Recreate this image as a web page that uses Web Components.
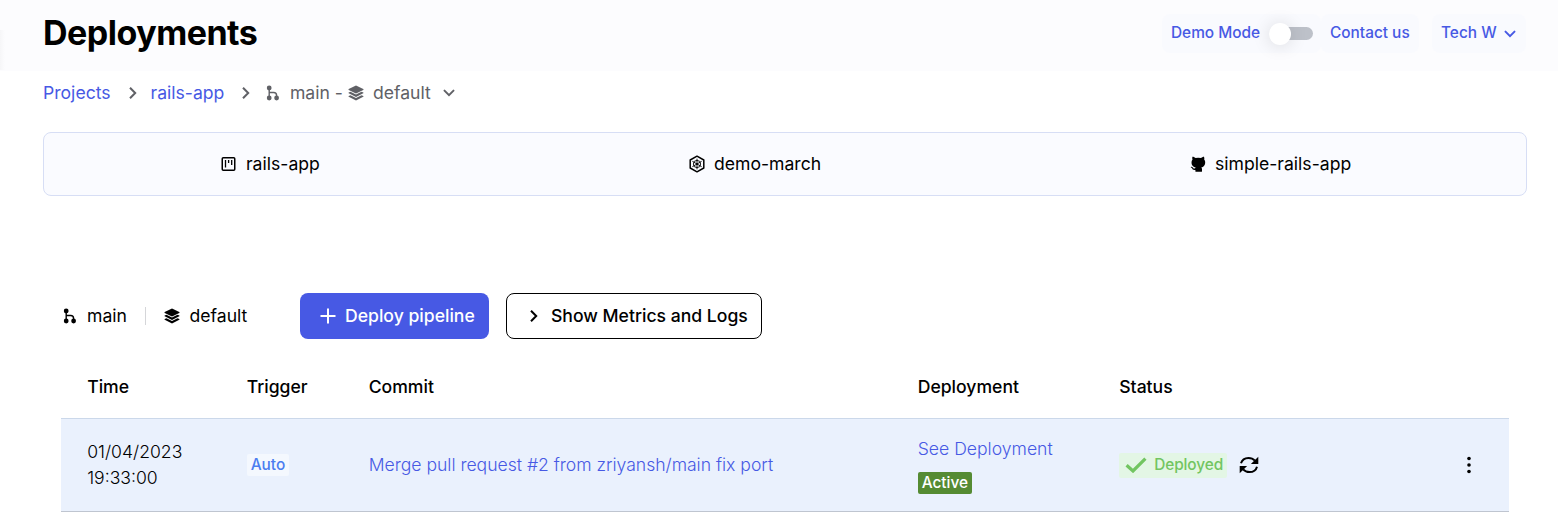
<!DOCTYPE html>
<html lang="en">
<head>
<meta charset="utf-8">
<title>Deployments</title>
<style>
body{margin:0;background:#fff;color:#000;font:400 17.6px/26px Inter,"Liberation Sans",sans-serif;overflow:hidden}
</style>
</head>
<body>
<deployments-page></deployments-page>
<script>
const define = (name, html) => customElements.define(name, class extends HTMLElement {
  constructor(){ super(); this.attachShadow({mode:"open"}).innerHTML = html; }
});

const ICONS = {
  right: ['0 0 10 14','<path d="M2 1.800 7.200 7 2 12.200" fill="none" stroke="currentColor" stroke-width="2"/>'],
  down: ['0 0 12 8','<path d="M1.500 1.600 6 6.100l4.500-4.500" fill="none" stroke="currentColor" stroke-width="2" stroke-linecap="round"/>'],
  branch: ['0 0 14 16','<g fill="currentColor"><circle cx="3.200" cy="3" r="2.400"/><circle cx="3.200" cy="13" r="2.400"/><circle cx="10.600" cy="13" r="2.400"/></g><path d="M3.200 3v10M3.200 7.500h4.500q2.900 0 2.900 3v2.500" fill="none" stroke="currentColor" stroke-width="1.400"/>'],
  layers: ['0 0 16 16','<g fill="currentColor"><path d="M8 .5 15.300 4.100q.5.400 0 .8L8 8.500.7 4.900q-.5-.4 0-.8z"/><path d="M.7 7.500 2.500 6.700 8 9.400l5.500-2.700 1.800.8q.5.400 0 .8L8 11.900.7 8.300q-.5-.4 0-.8z"/><path d="M.7 11 2.500 10.200 8 12.900l5.500-2.700 1.800.8q.5.400 0 .8L8 15.400.7 11.800q-.5-.4 0-.8z"/></g>'],
  board: ['0 0 16 16','<g fill="none" stroke="currentColor"><rect x="1.250" y="1.750" width="12.500" height="12.500" rx="1" stroke-width="1.500"/><path d="M4.500 4v7.500M7.600 4v3M10.700 4v5" stroke-width="1.300"/></g>'],
  cluster: ['0 0 16 18','<g fill="none" stroke="currentColor"><path d="M8 1.200 14.800 5v8L8 16.800 1.200 13V5z" stroke-width="1.500" stroke-linejoin="round"/><circle cx="8" cy="9" r="3.600" stroke-width=".9"/><path d="M8 3.700v10.600M3.400 6.350l9.200 5.300M3.400 11.650l9.200-5.300" stroke-width=".9"/></g><circle cx="8" cy="9" r="1.100" fill="currentColor"/>'],
  cat: ['0 0 16 16','<path fill="currentColor" d="M2.400.7C3.300.5 4.600 1.200 5.500 1.900q2.500-.4 5.600 0C12 1.200 13.200.500 14 .7q.6 1.500.2 2.900Q15.400 5 15.200 7c-.3 2.700-1.700 4.100-3.900 4.500q.7.700.7 1.500v2.200q0 .6-.6.600H6q-.6 0-.6-.6v-1.200c-2.500.3-2.900-.800-3.400-1.700Q1.600 11.500.7 11.200q0-.6.8-.5c1.200.200 1.500 1.200 2.200 1.700.7.400 1.500.300 2-.9C3.300 11.100 1.700 9.700 1.500 7q-.1-2 1-3.400Q2 2.200 2.400.7z"/>'],
  plus: ['0 0 16 16','<path d="M8 .5v15M.5 8h15" stroke="currentColor" stroke-width="2"/>'],
  check: ['0 0 22 16','<path d="M1.600 8.200 8 14 20.400 1.600" fill="none" stroke="currentColor" stroke-width="3.200"/>'],
  sync: ['0 0 20 18','<g fill="none" stroke="currentColor" stroke-width="2"><path d="M2 7.300C3 3.800 6 1.900 9.500 1.900c2.700 0 4.700.900 6.400 2.800"/><path d="M18 10.700c-1 3.500-4 5.400-7.500 5.400-2.700 0-4.700-.900-6.400-2.800"/></g><path d="M19.300.7v7.400h-7.400zM.7 17.300V9.900h7.400z" fill="currentColor"/>'],
  more: ['0 0 4 18','<g fill="currentColor"><circle cx="2" cy="2.500" r="1.800"/><circle cx="2" cy="9" r="1.800"/><circle cx="2" cy="15.500" r="1.800"/></g>']
};
customElements.define("ui-icon", class extends HTMLElement {
  connectedCallback(){
    if (this.shadowRoot) return;
    const [box, body] = ICONS[this.getAttribute("name")];
    const [, , w, h] = box.split(" ");
    this.attachShadow({mode:"open"}).innerHTML =
      `<style>:host{display:block;flex:none}svg{display:block}</style><svg width="${w}" height="${h}" viewBox="${box}">${body}</svg>`;
  }
});

define("page-header", `<style>
:host{display:flex;align-items:flex-start;box-sizing:border-box;height:71px;padding:0 32px 0 43px;background:linear-gradient(90deg,#f6f6f8,#fcfcfe00 5px) 0 30px/6px 40px no-repeat,#fcfcfe;color:#4759e4}
h1{margin:11px auto 0 0;font-size:34px;line-height:44px;font-weight:700;letter-spacing:-.5px;color:#000}
.chip{display:flex;align-items:center;box-sizing:border-box;height:39px;margin-top:14px;border-radius:8px;background:#f9fafe;font-size:15.400px;font-weight:500;padding:0 9px;white-space:nowrap}
.chip span{position:relative;top:-1px}
.demo{width:159px;padding-right:0}.contact{width:98px;margin-right:-1px;padding-right:0}.user{width:94px;margin-left:14px;gap:7px}
.switch{display:flex;align-items:center;width:44px;height:22px;margin-left:9px}
.knob{width:22px;height:22px;flex:none;border-radius:50%;background:#fff;box-shadow:0 1px 18px #0002;z-index:1}
.track{width:33px;height:13px;flex:none;margin-left:-11px;border-radius:7px;background:#bdc1c9}
</style><h1>Deployments</h1>
<div class="chip demo"><span>Demo Mode</span><div class="switch"><div class="knob"></div><div class="track"></div></div></div>
<div class="chip contact"><span>Contact us</span></div>
<div class="chip user"><span>Tech W</span><ui-icon name="down"></ui-icon></div>`);

define("crumb-trail", `<style>
:host{display:flex;align-items:center;height:26px;padding:9px 0 0 43px;color:#606166}
a{color:#4759e4}
.c1{margin:0 13px 0 17px}.c2{margin:0 14.500px 0 17px}
.b{margin-right:10px}.l{margin:0 9px 0 5px}.d{margin-left:12px}
</style><a>Projects</a><ui-icon class="c1" name="right"></ui-icon><a>rails-app</a><ui-icon class="c2" name="right"></ui-icon>
<ui-icon class="b" name="branch"></ui-icon><span>main -</span><ui-icon class="l" name="layers"></ui-icon><span>default</span><ui-icon class="d" name="down"></ui-icon>`);

define("info-bar", `<style>
:host{display:flex;box-sizing:border-box;height:64px;margin:26px 31px 0 43px;border:1px solid #d7def5;border-radius:8px;background:#fafbff}
div{display:flex;align-items:center;gap:9px}
.a{margin-left:177px;width:468px}.b{width:501px}
</style><div class="a"><ui-icon name="board"></ui-icon><span>rails-app</span></div><div class="b"><ui-icon name="cluster"></ui-icon><span>demo-march</span></div><div><ui-icon name="cat"></ui-icon><span>simple-rails-app</span></div>`);

define("pipeline-toolbar", `<style>
:host{display:flex;align-items:center;height:46px;margin:97px 0 0 63px}
.env{display:flex;align-items:center;gap:10px}
.env.b{width:82px}
.env.s{gap:9.500px;width:136px}
i{width:1px;height:18px;background:#d5d6d9;margin-right:18px}
button{display:flex;align-items:center;box-sizing:border-box;height:46px;border-radius:8px;font:500 17.600px/26px Inter,sans-serif;white-space:nowrap}
.p{width:189px;padding:0 0 0 20px;gap:9px;border:0;background:#4759e4;color:#fff;font-weight:550;margin-right:17px}
.m{width:256px;padding:0 0 0 22px;gap:12px;border:1px solid #000;background:#fff;color:#000}
</style><div class="env b"><ui-icon name="branch"></ui-icon><span>main</span></div><i></i><div class="env s"><ui-icon name="layers"></ui-icon><span>default</span></div>
<button class="p"><ui-icon name="plus"></ui-icon><span>Deploy pipeline</span></button><button class="m"><ui-icon name="right"></ui-icon><span>Show Metrics and Logs</span></button>`);

define("deployment-table", `<style>
:host{display:block;margin:16px 49px 0 61px}
.row{display:grid;grid-template-columns:159.500px 122px 549px 201.500px 348px auto;align-items:center;padding-left:26.200px}
.head{height:63px;font-weight:500}
.body{box-sizing:border-box;height:94px;background:#eaf1fd;border-top:1px solid #cbd8ea;border-bottom:1px solid #bfc5d0;font-weight:320}
a{color:#4759e4}
.body>a{letter-spacing:-.02px}
.tag{display:inline-block;border-radius:2px;font-size:15.400px;line-height:22px;padding:0 4px;font-weight:400}
.auto{position:relative;top:-1px;background:#f4f8fe;color:#4b7df0;font-weight:450}
.active{background:#558b33;color:#fff;font-weight:500}
.dep{display:flex;flex-direction:column;align-items:flex-start;gap:10px;margin-top:-1px}
.dep a{line-height:26px}
.st{display:flex;align-items:center;gap:12px}
.ok{display:flex;align-items:center;box-sizing:border-box;width:108px;height:25px;padding-left:6px;gap:7px;border-radius:2px;background:#e3f6e5;color:#72c561;font-size:15.400px;font-weight:450;letter-spacing:-.1px}
</style>
<div class="row head"><span>Time</span><span>Trigger</span><span>Commit</span><span>Deployment</span><span>Status</span></div>
<div class="row body"><span>01/04/2023<br>19:33:00</span><span><span class="tag auto">Auto</span></span><a>Merge pull request #2 from zriyansh/main fix port</a>
<div class="dep"><a>See Deployment</a><span class="tag active">Active</span></div>
<div class="st"><span class="ok"><ui-icon name="check"></ui-icon><span>Deployed</span></span><ui-icon name="sync"></ui-icon></div><ui-icon name="more"></ui-icon></div>`);

define("deployments-page", `<style>:host{display:block;height:520px}</style>
<page-header></page-header><crumb-trail></crumb-trail><info-bar></info-bar><pipeline-toolbar></pipeline-toolbar><deployment-table></deployment-table>`);
</script>
</body>
</html>
